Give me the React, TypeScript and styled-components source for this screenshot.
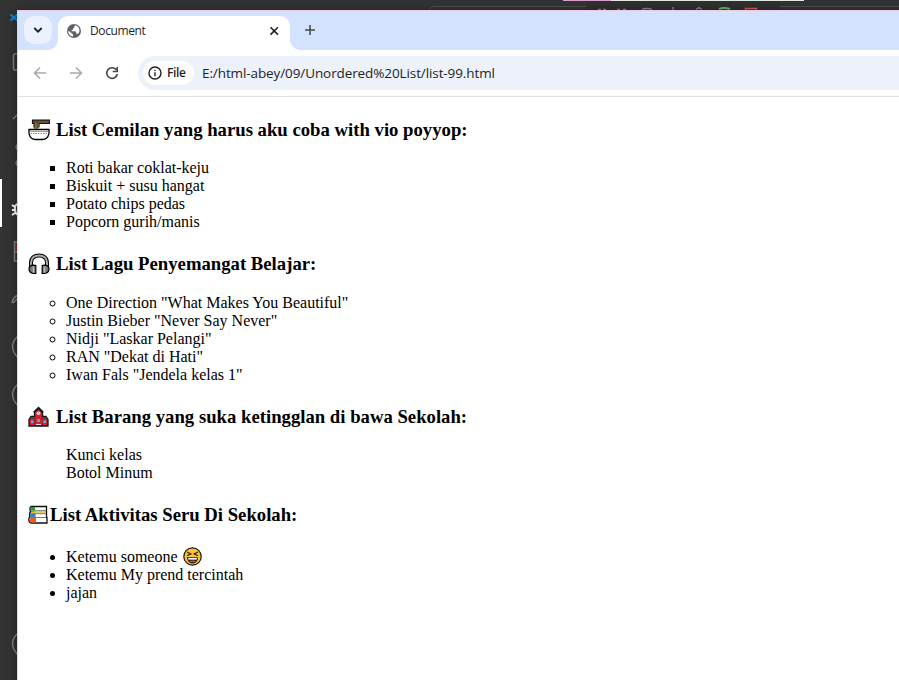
import React from "react";
import styled, { createGlobalStyle } from "styled-components";

const GlobalStyle = createGlobalStyle`
  * { box-sizing: border-box; }
  html, body { margin: 0; padding: 0; overflow: hidden; background: #333; }
`;

const Desktop = styled.div`
  position: relative;
  width: 899px;
  height: 680px;
  overflow: hidden;
  background: #333;
  padding: 10px 0 0 17px;
`;

const EditorIcons = styled.svg`
  position: absolute;
  left: 0;
  top: 0;
`;

const Browser = styled.div`
  position: relative;
  display: flex;
  flex-direction: column;
  width: 900px;
  height: 690px;
  border: 1px solid #e6cfe0;
  border-top-color: #e8c8e4;
  background: #fff;
  box-shadow: 0 2px 11px rgba(0, 0, 0, 0.4);
`;

const TabStrip = styled.div`
  display: flex;
  align-items: flex-start;
  height: 39px;
  flex: none;
  background: #d3e2fd;
  padding: 5px 0 0 6px;
`;

const TabSearch = styled.div`
  display: flex;
  align-items: center;
  justify-content: center;
  width: 28px;
  height: 28px;
  border-radius: 10px;
  background: #ebf1fe;
`;

const Tab = styled.div`
  position: relative;
  display: flex;
  align-items: center;
  width: 232px;
  height: 34px;
  margin-left: 6px;
  padding: 0 10px 5px 9px;
  border-radius: 10px 10px 0 0;
  background: #fff;
  &::before,
  &::after {
    content: "";
    position: absolute;
    bottom: 0;
    width: 10px;
    height: 10px;
  }
  &::before {
    left: -10px;
    background: radial-gradient(circle at 0 0, transparent 9.5px, #fff 10px);
  }
  &::after {
    right: -10px;
    background: radial-gradient(circle at 100% 0, transparent 9.5px, #fff 10px);
  }
`;

const TabTitle = styled.span`
  flex: 1;
  margin-left: 9px;
  font: 12px/16px "Open Sans", "Noto Sans", sans-serif;
  letter-spacing: -0.4px;
  color: #1f1f1f;
`;

const NewTab = styled.div`
  display: flex;
  width: 12px;
  margin: 8px 0 0 14px;
`;

const Toolbar = styled.div`
  display: flex;
  align-items: center;
  height: 47px;
  flex: none;
  padding-left: 14px;
  border-bottom: 1px solid #dfe1e4;
  background: #fff;
`;

const NavButton = styled.div`
  display: flex;
  width: 16px;
  margin-right: 20px;
`;

const AddressBar = styled.div`
  display: flex;
  align-items: center;
  flex: 1;
  height: 34px;
  margin-left: -2px;
  padding-left: 5px;
  border-radius: 17px 0 0 17px;
  background: #ecf1fa;
`;

const FileChip = styled.div`
  display: flex;
  align-items: center;
  width: 51px;
  height: 24px;
  padding-left: 5px;
  border-radius: 12px;
  background: #fff;
  font: 600 12px/24px "Open Sans", "Noto Sans", sans-serif;
  letter-spacing: -0.35px;
  color: #1f1f1f;
  svg { margin-right: 5px; flex: none; }
`;

const Address = styled.span`
  margin-left: 8px;
  white-space: nowrap;
  font: 13.5px/20px "Open Sans", "Noto Sans", sans-serif;
  letter-spacing: -0.1px;
  color: #1f1f1f;
`;

const Page = styled.main`
  display: flex;
  flex-direction: column;
  gap: 21px;
  padding: 21px 8px 0;
  color: #000;
  font: 16px/18px "Liberation Serif", "Times New Roman", serif;
`;

const Heading = styled.h3<{ $gap: number; $after: number }>`
  display: flex;
  align-items: center;
  gap: ${(p) => p.$gap}px;
  height: 24px;
  margin: 0 0 ${(p) => p.$after}px;
  padding-left: 2px;
  font-size: 18.72px;
  font-weight: bold;
  line-height: 24px;
  white-space: nowrap;
  svg { flex: none; }
`;

const List = styled.ul<{ $marker: string }>`
  margin: 0;
  padding: 0 0 0 40px;
  list-style-type: ${(p) => p.$marker};
`;

const Item = styled.li`
  height: 18px;
  white-space: nowrap;
  svg { position: absolute; margin: -1px 0 0 5px; }
`;

const Noodles = () => (
  <svg width="22" height="22" viewBox="0 0 22 22">
    <path d="M1 10.500h20v4.200q-1.400 5.800-6.500 5.800h-7Q2.400 20.500 1 14.700z" fill="#fff" stroke="#000" strokeWidth="1.300" />
    <path d="M2 12.500h18" stroke="#e4606c" strokeWidth=".8" />
    <path d="M2.500 14.500h17" stroke="#dc3f4e" strokeWidth=".8" strokeDasharray="1.500 1" />
    <path d="M4.500 1.200h17v3.300H11V8H6V4.500H4.500z" fill="#6b5434" stroke="#17120a" strokeWidth="1.200" />
    <path d="M6 4h4.500v6H6z" fill="#86704a" />
    <path d="M6.500 2v7.500M9.200 2v7.500" stroke="#4a3921" strokeWidth=".8" />
  </svg>
);

const Headphones = () => (
  <svg width="22" height="22" viewBox="0 0 22 22" fill="none">
    <path d="M3 15V10C3 5 6.500 2.500 11 2.500S19 5 19 10v5" stroke="#000" strokeWidth="4" />
    <path d="M3 15V10C3 5 6.500 2.500 11 2.500S19 5 19 10v5" stroke="#aaa" strokeWidth="2" />
    <path d="M7.800 12.500v8H5.500Q1 19.800 1 16q0-3.600 4.500-3.800z" fill="#777" stroke="#000" strokeWidth="1.200" />
    <path d="M14.200 12.500v8h2.300Q21 19.800 21 16q0-3.600-4.500-3.800z" fill="#777" stroke="#000" strokeWidth="1.200" />
    <path d="M5.500 13.500v6M16.500 13.500v6" stroke="#bbb" strokeWidth="1.600" />
  </svg>
);

const School = () => (
  <svg width="21" height="22" viewBox="0 0 21 22">
    <path d="M1 20v-6.500l2-3h3.500V6l4-3.500 4 3.500v4.500H18l2 3V20z" fill="#d42131" stroke="#151515" strokeWidth="1.300" />
    <path d="M2 13l1.300-2h3.200v2zM19 13l-1.300-2h-3.200v2z" fill="#4a4a4a" />
    <path d="M5.800 6.300L10.500 1.700l4.700 4.600" fill="none" stroke="#151515" strokeWidth="1.700" />
    <path d="M6.800 10.500V19M14.200 10.500V19" stroke="#8e1923" strokeWidth=".8" />
    <circle cx="10.500" cy="7.200" r="1.800" fill="#fff" />
    <path d="M10.500 6v1.500h1" fill="none" stroke="#b33" strokeWidth=".6" />
    <path d="M3 14.500h2.500V17H3zM9.300 13h2.500v3H9.300zM15.500 14.500H18V17h-2.500z" fill="#43bdeb" />
    <path d="M8 18.500h5" stroke="#ddd" />
  </svg>
);

const Books = () => (
  <svg width="20" height="20" viewBox="0 0 20 20">
    <path d="M3 1.500h15.500V6v6.500h.5v5.500H3Q.8 17.500.8 14.800q0-2 1-3Q.8 9 2.600 6.500 1 3 3 1.500z" fill="#fff" stroke="#111" strokeWidth="1.300" />
    <path d="M3 2h4v3.500H3Q1.500 4 3 2z" fill="#18a524" />
    <path d="M7 5.300h11" stroke="#8fbc74" strokeWidth=".8" />
    <path d="M3 6.300h4v2H3z" fill="#f2ba1e" />
    <path d="M7 7.600h11" stroke="#ddc664" />
    <path d="M2.500 9h5v3h-5Q1 11 2.500 9z" fill="#2588db" />
    <path d="M2.500 13h5.500v4.500H2.500Q.8 15.500 2.500 13z" fill="#f75b19" />
    <path d="M2.500 6h16M2.500 8.700h16M2 12.500h17" stroke="#222" strokeWidth=".6" />
  </svg>
);

const Laughing = () => (
  <svg width="20" height="20" viewBox="0 0 20 20" fill="none" strokeLinecap="round">
    <circle cx="9.500" cy="9.500" r="8.700" fill="#fbc232" stroke="#171717" strokeWidth="1.200" />
    <path d="M4.500 5.200l3.400 1.800-3.400 1.500M14.500 5.200L11.100 7l3.400 1.500" stroke="#20180a" strokeWidth="1.100" />
    <path d="M4.500 10.700h10q-.4 5.300-5 5.300t-5-5.300z" fill="#352515" stroke="#271c0f" />
    <path d="M5.200 10.900h8.600v1.700H5.200z" fill="#fff" />
    <path d="M7.200 14.700q2.300-1.300 4.600 0" stroke="#df503e" strokeWidth="1.200" />
  </svg>
);

const lists: {
  icon: React.ReactNode; gap: number; after: number; title: string; marker: string; items: React.ReactNode[];
}[] = [
  {
    icon: <Noodles />, gap: 6, after: 17, marker: "square",
    title: "List Cemilan yang harus aku coba with vio poyyop:",
    items: ["Roti bakar coklat-keju", "Biskuit + susu hangat", "Potato chips pedas", "Popcorn gurih/manis"],
  },
  {
    icon: <Headphones />, gap: 6, after: 18, marker: "circle",
    title: "List Lagu Penyemangat Belajar:",
    items: [
      'One Direction "What Makes You Beautiful"', 'Justin Bieber "Never Say Never"',
      'Nidji "Laskar Pelangi"', 'RAN "Dekat di Hati"', 'Iwan Fals "Jendela kelas 1"',
    ],
  },
  {
    icon: <School />, gap: 7, after: 17, marker: "none",
    title: "List Barang yang suka ketingglan di bawa Sekolah:",
    items: ["Kunci kelas", "Botol Minum"],
  },
  {
    icon: <Books />, gap: 2, after: 21, marker: "disc",
    title: "List Aktivitas Seru Di Sekolah:",
    items: [<>Ketemu someone<Laughing /></>, "Ketemu My prend tercintah", "jajan"],
  },
];

export default function App() {
  return (
    <>
      <GlobalStyle />
      <Desktop>
        <EditorIcons width="899" height="680" fill="none" stroke="#858585" strokeWidth="1.4">
          <path d="M429 11Q430 6.500 435 6.500H586M780 6.500H899" stroke="#505050" strokeWidth="1" />
          <path d="M586 1H780V10H586z" fill="#303030" stroke="none" />
          <path d="M563 .5h48" stroke="#d8a0cf" strokeWidth="1" />
          <path d="M611 .5h193" stroke="#e2e8e2" strokeWidth="1" />
          <path d="M598 9.500h3M603 9.500h3M642 9.500q5-2 10 0M673 7v3M696 9.500l3-2 3 2" />
          <path d="M617 9.500h3M623 9.500h3" stroke="#5e8fc5" />
          <path d="M719 9q5-2 11 0" stroke="#66b65b" strokeWidth="2" />
          <path d="M745.500 10V8.500h11V10" stroke="#d65d43" />
          <path d="M10.500 14.500l7 6M10.500 20.500l7-6" stroke="#0a8ad4" strokeWidth="2.200" />
          <path d="M18 54h-3q-1.500 0-1.500 2v12q0 2 1.500 2h3" />
          <path d="M13 119l6-6M18 144q-4 3 0 6M18 160q-4 3 0 6M18 242h-3.500v19H18M14.500 252H18" />
          <path d="M12 303q1-6 6-8M13 303l5-5" />
          <path d="M16 243v8" stroke="#a7373b" />
          <path d="M18 336q-11 10 0 22M18 384q-11 10 0 22M18 633q-11 10 0 22" />
          <path d="M19 204q-5 0-4 6t4 4M12 205l3 2M12 210h3M12 215l3-2" stroke="#fff" strokeWidth="2" />
          <path d="M0 179h2v48H0z" fill="#fff" stroke="none" />
        </EditorIcons>
        <Browser>
          <TabStrip>
            <TabSearch>
              <svg width="10" height="8" fill="none" stroke="#1f1f1f" strokeWidth="1.800"><path d="M1.300 2L5 5.700 8.700 2" /></svg>
            </TabSearch>
            <Tab>
              <svg width="14" height="14" viewBox="0 0 14 14">
                <circle cx="7" cy="7" r="7" fill="#5f6368" />
                <path d="M7.500 1.500v1.700l-1.300 1v1.500H4.700v1.500h3.600l1 1.200v1.300h1.800l1.200-1.800A5.800 5.800 0 0 0 9 1.600zM1.300 6.500v1A5.700 5.700 0 0 0 6 12.600v-2.100L4.700 9.200z" fill="#fff" />
              </svg>
              <TabTitle>Document</TabTitle>
              <svg width="11" height="10" fill="none" stroke="#1f1f1f" strokeWidth="1.600"><path d="M1.500 1.200l7.400 7.400M8.900 1.200L1.500 8.600" /></svg>
            </Tab>
            <NewTab>
              <svg width="12" height="12" fill="none" stroke="#474747" strokeWidth="1.500"><path d="M6 1v10M1 6h10" /></svg>
            </NewTab>
          </TabStrip>
          <Toolbar>
            <NavButton><svg width="16" height="16" fill="none" stroke="#a9a9a9" strokeWidth="1.500"><path d="M14 8H3M8 2.500L2.500 8 8 13.500" /></svg></NavButton>
            <NavButton><svg width="16" height="16" fill="none" stroke="#a9a9a9" strokeWidth="1.500"><path d="M2 8h11M8 2.500L13.500 8 8 13.500" /></svg></NavButton>
            <NavButton><svg width="16" height="16" fill="none" stroke="#474747" strokeWidth="1.600"><path d="M12.200 4.700A5.300 5.300 0 1 0 13.300 9M13.200 2v4.500H8.700" /></svg></NavButton>
            <AddressBar>
              <FileChip>
                <svg width="14" height="14" fill="none" stroke="#1f1f1f" strokeWidth="1.400"><circle cx="7" cy="7" r="6" /><path d="M7 6.300v4M7 3.700v1.400" /></svg>
                File
              </FileChip>
              <Address>E:/html-abey/09/Unordered%20List/list-99.html</Address>
            </AddressBar>
          </Toolbar>
          <Page>
            {lists.map((l) => (
              <section key={l.title}>
                <Heading $gap={l.gap} $after={l.after}>{l.icon}<span>{l.title}</span></Heading>
                <List $marker={l.marker}>{l.items.map((item, i) => <Item key={i}>{item}</Item>)}</List>
              </section>
            ))}
          </Page>
        </Browser>
      </Desktop>
    </>
  );
}
